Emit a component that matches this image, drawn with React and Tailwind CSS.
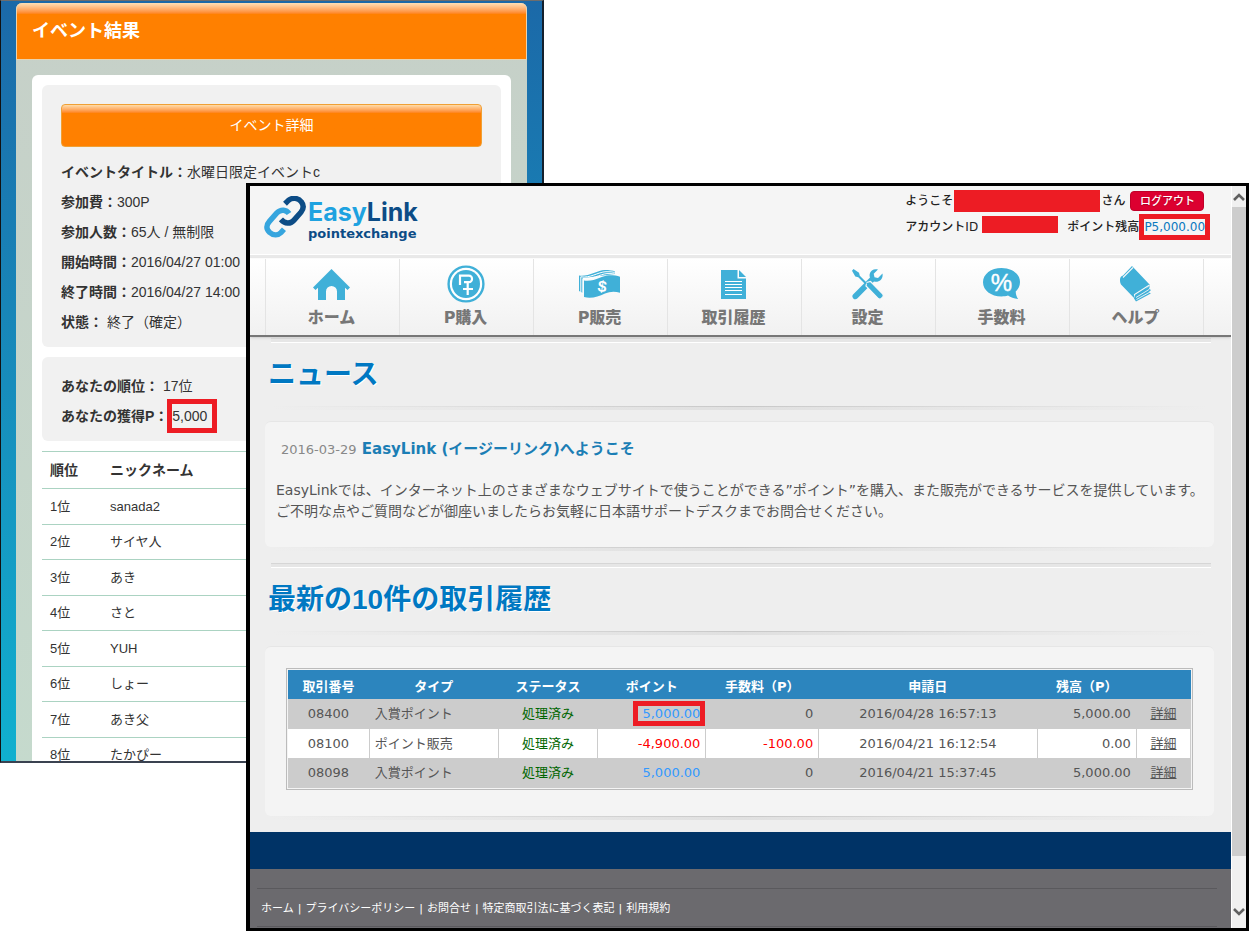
const ranking = [
  { rank: "1位", name: "sanada2" },
  { rank: "2位", name: "サイヤ人" },
  { rank: "3位", name: "あき" },
  { rank: "4位", name: "さと" },
  { rank: "5位", name: "YUH" },
  { rank: "6位", name: "しょー" },
  { rank: "7位", name: "あき父" },
  { rank: "8位", name: "たかぴー" },
];

const eventInfo = [
  { label: "イベントタイトル：", value: "水曜日限定イベントc" },
  { label: "参加費：", value: "300P" },
  { label: "参加人数：", value: "65人 / 無制限" },
  { label: "開始時間：", value: "2016/04/27 01:00" },
  { label: "終了時間：", value: "2016/04/27 14:00" },
  { label: "状態：", value: " 終了（確定）" },
];

const transactions = [
  {
    id: "08400",
    type: "入賞ポイント",
    point: "5,000.00",
    fee: "0",
    date: "2016/04/28 16:57:13",
    balance: "5,000.00",
    marked: true,
  },
  {
    id: "08100",
    type: "ポイント販売",
    point: "-4,900.00",
    fee: "-100.00",
    date: "2016/04/21 16:12:54",
    balance: "0.00",
  },
  {
    id: "08098",
    type: "入賞ポイント",
    point: "5,000.00",
    fee: "0",
    date: "2016/04/21 15:37:45",
    balance: "5,000.00",
  },
];

const footerLinks = [
  "ホーム",
  "プライバシーポリシー",
  "お問合せ",
  "特定商取引法に基づく表記",
  "利用規約",
];

function HomeIcon() {
  return (
    <svg width="37" height="31" viewBox="0 0 37 31" fill="#40b0d8">
      <path d="M18.5 0 37 18.5 34.5 21 32 18.8V31h-8v-8.5a5.5 5.5 0 0 0-11 0V31H5V18.8L2.5 21 0 18.5z" />
    </svg>
  );
}

function BuyIcon() {
  return (
    <svg width="38" height="38" viewBox="0 0 38 38">
      <circle cx="19" cy="19" r="17.4" fill="#fff" stroke="#40b0d8" strokeWidth="2.4" />
      <circle cx="19" cy="19" r="14" fill="#40b0d8" />
      <g fill="none" stroke="#fff" strokeWidth="2.2">
        <path d="M13 20v-9.300h9a3 3 0 0 1 3 3v.500a3 3 0 0 1-3 3h-5" />
        <path d="M20.700 18v12M16 24h10" />
      </g>
    </svg>
  );
}

function SellIcon() {
  return (
    <svg width="41" height="29" viewBox="0 0 41 29">
      <path d="M0 5.5C9 7 18 .5 26 0c4 0 8 .5 10 1.5V4L4 8v15l-4-2z" fill="#40b0d8" />
      <path d="M1.8 22.5V6.8C11 8.5 19 2 27 1.7c4-.1 8 .3 11 1.3" fill="none" stroke="#fff" />
      <path d="M3.8 24V8.6C13 10 21 4 28 3.6c4-.1 8 .2 11 1" fill="none" stroke="#fff" />
      <path d="M5 10.5C16 12 23 5.5 30 5.2c4-.1 8 .3 11 1.6v16c-5-1.6-10-1.4-15 .6-7 3-13 5.500-21 3.600z" fill="#40b0d8" />
      <text x="23" y="22" textAnchor="middle" fontSize="16" fontWeight="700" fontFamily="Liberation Sans" fill="#fff" transform="rotate(8 23 17)">
        $
      </text>
    </svg>
  );
}

function HistoryIcon() {
  return (
    <svg width="25" height="29" viewBox="0 0 25 29">
      <path d="M0 0h16.500v8.500H25V29H0z" fill="#40b0d8" />
      <path d="M18 0v7h7z" fill="#40b0d8" />
      <path d="M4 11.500h17M4 14.500h17M4 17.500h17M4 20.500h17M4 24.500h17" stroke="#fff" strokeWidth="1.200" />
    </svg>
  );
}

function SettingIcon() {
  return (
    <svg width="32" height="31" viewBox="0 0 32 31">
      {/* wrench */}
      <path
        d="M30.500 4.500 26 9l-3.500-.7-.8-3.600L26 .6c-3.500-1.300-7.500.6-8.300 4.400-.3 1.300-.1 2.500.3 3.600L1.300 25.200c-1.300 1.300-1.300 3 0 4.200 1.300 1.200 3 1.100 4.200-.2L22 12.500c4.800 1.600 9.500-2.600 8.500-8z"
        fill="#40b0d8"
      />
      {/* screwdriver */}
      <path d="m14.500 13.500 4-1 11.800 12c1.200 1.300 1.300 2.600.3 3.700l-1.300 1.300c-1.200 1-2.400.8-3.500-.4L14 17z" fill="#40b0d8" stroke="#f8f8f8" strokeWidth="1.200" />
      <path d="M1.500 0 7 3.800l.8 3L15 14l-1.500 1.500-7.200-7.200-3-.8L0 1.800z" fill="#40b0d8" />
    </svg>
  );
}

function FeeIcon() {
  return (
    <svg width="37" height="32" viewBox="0 0 37 32">
      <path
        d="M18.500 0C29 0 37 6 37 14c0 4-1.700 7-4.300 9.500.2 3 .9 5.300 2.300 7.500-4-.3-7.500-1.500-10-3.400-2 .6-4 .9-6.500.9C8 28.500 0 22.500 0 14.300S8 0 18.500 0z"
        fill="#40b0d8"
      />
      <text x="18.500" y="22.500" textAnchor="middle" fontSize="24" fontWeight="400" fontFamily="Liberation Sans" fill="#fff" stroke="#fff" strokeWidth=".4">
        %
      </text>
    </svg>
  );
}

function HelpIcon() {
  return (
    <svg width="32" height="36" viewBox="0 0 32 36">
      <path d="M0 13.500C0 11 1.500 10 3 9.500L12 0l18 19-14.500 14.500L1 18.500c-.8-1.500-1-3-1-5z" fill="#40b0d8" />
      <path d="M3 11.500 13 1.500M15 32l-.5-3.500 15-9.500" fill="none" stroke="#f6f6f6" strokeWidth="1.100" />
      <path d="M15 29.500 30 20l-1 3 2 1-2 2 1.800 1.500L16 35.500l-2-3z" fill="#40b0d8" />
      <path d="m16 31.500 13-8M16.500 33.500 30 26" stroke="#f6f6f6" strokeWidth=".9" />
    </svg>
  );
}

const navItems = [
  { label: "ホーム", Icon: HomeIcon },
  { label: "P購入", Icon: BuyIcon },
  { label: "P販売", Icon: SellIcon },
  { label: "取引履歴", Icon: HistoryIcon },
  { label: "設定", Icon: SettingIcon },
  { label: "手数料", Icon: FeeIcon },
  { label: "ヘルプ", Icon: HelpIcon },
];

function EventWindow() {
  return (
    <div className="absolute left-0 top-0 h-[763px] w-[544px] overflow-hidden border border-r-2 border-b-2 border-t-[#6d6d6d] border-l-[#111] border-r-[#15202c] border-b-[#3a4250] bg-linear-to-b from-[#1b69a8] to-[#10b0cf] px-[15px] pt-[2px] font-['Liberation_Sans','Noto_Sans_CJK_JP',sans-serif] text-[#333]">
      <div className="rounded-t-md bg-linear-to-b from-[#c6d0c8] to-[#c5dacd]">
        <h1 className="h-[57px] rounded-t-md border-x border-b border-[#e9d3ae] bg-linear-to-b from-[#ffe0b5] via-[#ff8000] via-20% to-[#ff8000] pl-[15px] text-lg leading-[56px] font-bold text-white">
          イベント結果
        </h1>
        <div className="mx-4 mt-[15px] rounded-t-md bg-white p-[10px]">
          <div className="rounded-md bg-[#f1f1f1] px-[19px] pt-[19px] pb-[10px]">
            <button
              type="button"
              className="mb-[10px] h-[43px] w-full rounded-sm border border-[#f0a035] bg-linear-to-b from-[#ffdca8] via-[#ff8000] via-20% to-[#ff8000] pb-[2px] text-sm text-white"
            >
              イベント詳細
            </button>
            {eventInfo.map((row) => (
              <p key={row.label} className="text-sm leading-[30px] whitespace-pre">
                <b>{row.label}</b>
                {row.value}
              </p>
            ))}
          </div>
          <div className="mt-[10px] rounded-md bg-[#f1f1f1] px-[19px] pt-[14px] pb-[10px] text-sm leading-[30px]">
            <p>
              <b>あなたの順位：</b> 17位
            </p>
            <p>
              <b>あなたの獲得P：</b>{" "}
              <span className="relative">
                5,000
                <span className="absolute -inset-y-[9px] -left-[5px] -right-[10px] border-[5px] border-[#ed1c24]"></span>
              </span>
            </p>
          </div>
          <table className="mt-[10px] w-full border-t border-[#abd3c2] text-left text-[13px]">
            <thead>
              <tr className="h-[37px] border-b border-[#abd3c2] text-sm">
                <th className="w-[60px] pl-2">順位</th>
                <th className="pl-2">ニックネーム</th>
              </tr>
            </thead>
            <tbody>
              {ranking.map((row) => (
                <tr key={row.rank} className="border-b border-[#abd3c2] odd:h-9 even:h-[35px]">
                  <td className="pl-2">{row.rank}</td>
                  <td className="pl-2">{row.name}</td>
                </tr>
              ))}
            </tbody>
          </table>
        </div>
      </div>
    </div>
  );
}

function Logo() {
  return (
    <a href="#" className="mt-[10px] flex h-[44px]">
      <svg width="42" height="42" viewBox="0 0 124 124" fill="none" strokeWidth="16">
        <path d="M74 52C66 40 50 38 38 50L16 75C6 86 6 98 16 107c12 11 26 9 34 1l9-10" stroke="#36a5de" />
        <path d="m62 23 10-10c12-10 30-7 38 4 8 10 7 21-1 31L88 72c-10 11-26 11-38-3" stroke="#0c4c86" />
      </svg>
      <span className="ml-[2px] flex flex-col pt-1">
        <span className="font-['Inter',sans-serif] text-[25px] leading-6 font-bold text-[#1ea2e0]">
          Easy<span className="text-[#0c4c86]">Link</span>
        </span>
        <span className="text-[13px] leading-5 font-bold text-[#0c4c86]">pointexchange</span>
      </span>
    </a>
  );
}

function SiteHeader() {
  return (
    <header className="flex h-[68px] justify-between bg-[#f5f5f5] pr-[26px] pl-[14px]">
      <Logo />
      <div className="pt-1 text-xs font-medium text-[#222]">
        <div className="flex h-[22px] items-center">
          <span>ようこそ</span>
          <span className="ml-px h-full w-[146px] bg-[#ed1c24]"></span>
          <span className="ml-px">さん</span>
          <button
            type="button"
            className="ml-[5px] h-5 w-[74px] rounded-sm border border-[#c00028] bg-[#dc0030] text-[11px] leading-none text-white text-shadow-xs"
          >
            ログアウト
          </button>
        </div>
        <div className="mt-1 flex h-[22px] items-center">
          <span className="w-[77px]">アカウントID</span>
          <span className="h-[17px] w-[76px] self-start bg-[#ed1c24]"></span>
          <span className="ml-[9px]">ポイント残高</span>
          <span className="relative ml-[5px] font-normal text-[#0a78bf]">
            P5,000.00
            <span className="absolute -inset-x-[5px] -inset-y-[5px] border-[5px] border-[#ed1c24]"></span>
          </span>
        </div>
      </div>
    </header>
  );
}

// thin line that fades out at both ends, with a soft edge under it
function FadeLine() {
  return (
    <div className="mx-[6px]">
      <div className="h-px bg-linear-to-r from-transparent via-[#c8c8c8] to-transparent"></div>
      <div className="h-[3px] bg-linear-to-r from-transparent via-[#e0e0e0] to-transparent"></div>
    </div>
  );
}

function SectionHeading({ children }) {
  return (
    <div>
      <div className="mr-[3px] ml-[6px] h-[5px] border-t border-b border-t-[#d6d6d6] border-b-white bg-[#e6e6e6]"></div>
      <h2 className="h-[63px] pl-[3px] font-['Liberation_Sans','Noto_Sans_CJK_JP',sans-serif] text-[28px] leading-16 font-bold text-[#0078c2] text-shadow-[1px_1px_0_#fff]">
        {children}
      </h2>
      <FadeLine />
    </div>
  );
}

function Card({ children }) {
  return (
    <div className="mt-[11px] mb-3">
      <div className="rounded-md border-t border-[#e6e6e6] bg-[#f4f4f4]">{children}</div>
      <FadeLine />
    </div>
  );
}

function TransactionTable() {
  return (
    <div className="border border-[#bbb] p-px">
      <table className="w-full table-fixed text-[13px] leading-5 text-[#555]">
        <colgroup>
          <col className="w-[9%]" />
          <col className="w-[14.300%]" />
          <col className="w-[11%]" />
          <col className="w-[12%]" />
          <col className="w-[12.500%]" />
          <col className="w-[24.200%]" />
          <col className="w-[11%]" />
          <col className="w-[6%]" />
        </colgroup>
        <thead>
          <tr className="h-[29px] bg-[#2c85be] text-white">
            <th className="pt-1">取引番号</th>
            <th className="pt-1">タイプ</th>
            <th className="pt-1">ステータス</th>
            <th className="pt-1">ポイント</th>
            <th className="pt-1">手数料（P）</th>
            <th className="pt-1">申請日</th>
            <th className="pt-1">残高（P）</th>
            <th className="pt-1"></th>
          </tr>
        </thead>
        <tbody>
          {transactions.map((t) => {
            const minus = t.point.startsWith("-");
            return (
              <tr
                key={t.id}
                className="odd:h-[30px] odd:bg-[#ccc] even:h-[29px] even:bg-white [&>td]:border-r [&>td]:border-[#ccc]"
              >
                <td className="text-center">{t.id}</td>
                <td className="px-[5px]">{t.type}</td>
                <td className="text-center text-[#060]">処理済み</td>
                <td className={minus ? "px-[5px] text-right text-[#f00]" : "px-[5px] text-right text-[#39f]"}>
                  <span className="relative">
                    {t.point}
                    {t.marked && (
                      <span className="absolute -inset-y-[5px] -left-[9px] -right-[5px] border-[5px] border-[#ed1c24]"></span>
                    )}
                  </span>
                </td>
                <td className={minus ? "px-[5px] text-right text-[#f00]" : "px-[5px] text-right"}>{t.fee}</td>
                <td className="text-center">{t.date}</td>
                <td className="px-[5px] text-right">{t.balance}</td>
                <td className="text-center">
                  <a href="#" className="underline">
                    詳細
                  </a>
                </td>
              </tr>
            );
          })}
        </tbody>
      </table>
    </div>
  );
}

function ScrollBar() {
  return (
    <div className="flex w-[15px] shrink-0 flex-col border-l border-white bg-[#f0f0f0]">
      <button type="button" aria-label="上へ" className="flex h-[21px] items-center justify-center">
        <svg width="12" height="8" viewBox="0 0 12 8" fill="none" stroke="#606060" strokeWidth="2.600">
          <path d="m1 7 5-5 5 5" />
        </svg>
      </button>
      <div className="grow bg-[#cdcdcd]"></div>
      <button type="button" aria-label="下へ" className="flex h-[72px] items-end justify-center pb-3">
        <svg width="12" height="8" viewBox="0 0 12 8" fill="none" stroke="#606060" strokeWidth="2.600">
          <path d="m1 1 5 5 5-5" />
        </svg>
      </button>
    </div>
  );
}

function EasyLinkWindow() {
  return (
    <div className="relative ml-[246px] flex border-3 border-l-4 border-black bg-[#eee] font-['DejaVu_Sans','Noto_Sans_CJK_JP',sans-serif]">
      <div className="min-w-0 grow">
        <SiteHeader />

        <div className="h-[5px] border-y border-white bg-[#e9e9e9]"></div>
        <nav className="border-b-2 border-[#777] bg-linear-to-b from-white to-[#f1f1f1] pr-[27px] pl-[15px] shadow-sm">
          <div className="grid h-[76px] grid-cols-7 border-r border-[#e4e4e4]">
            {navItems.map(({ label, Icon }) => (
              <a
                key={label}
                href="#"
                className="flex flex-col items-center border-l border-[#e4e4e4] pt-[5px] pr-[2px] text-base leading-7 font-black text-[#777]"
              >
                <span className="flex h-10 items-center">
                  <Icon />
                </span>
                {label}
              </a>
            ))}
          </div>
        </nav>

        <main className="pt-px pr-[17px] pl-[15px]">
          <SectionHeading>ニュース</SectionHeading>
          <Card>
            <article className="h-[125px] pt-[17px] pl-[11px]">
              <h3 className="pl-[5px] text-[15px] leading-5 font-bold text-[#1b7eb5]">
                <time className="text-[13px] font-normal text-[#888]">2016-03-29</time> EasyLink (イージーリンク)へようこそ
              </h3>
              <p className="mt-5 text-sm leading-[21px] text-[#555]">
                EasyLinkでは、インターネット上のさまざまなウェブサイトで使うことができる”ポイント”を購入、また販売ができるサービスを提供しています。
                <br />
                ご不明な点やご質問などが御座いましたらお気軽に日本語サポートデスクまでお問合せください。
              </p>
            </article>
          </Card>

          <SectionHeading>最新の10件の取引履歴</SectionHeading>
          <Card>
            <div className="px-[21px] pt-[21px] pb-[26px]">
              <TransactionTable />
            </div>
          </Card>
        </main>

        <div className="h-[37px] bg-[#036]"></div>
        <footer className="h-[59px] bg-[#6b6a6e] pt-[19px] pr-[14px] pl-[7px]">
          <div className="flex h-[39px] items-center border-y border-[#5a595d] pt-1 pl-1 text-[11px] text-white">
            {footerLinks.map((link, i) => (
              <span key={link}>
                {i > 0 && <span className="px-1">|</span>}
                <a href="#">{link}</a>
              </span>
            ))}
          </div>
        </footer>
      </div>
      <ScrollBar />
    </div>
  );
}

export default function App() {
  return (
    <div className="relative min-h-screen bg-white pt-[183px]">
      <EventWindow />
      <EasyLinkWindow />
    </div>
  );
}
